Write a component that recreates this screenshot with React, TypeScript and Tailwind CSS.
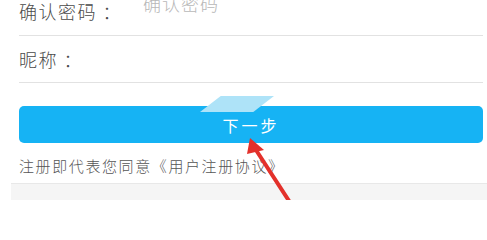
const font = { fontFamily: '"Noto Sans CJK SC", "Noto Sans", sans-serif' };

const Arrow = () => (
  <svg className="absolute left-0 top-0 pointer-events-none" width="487" height="200" viewBox="0 0 487 200">
    <line x1="256" y1="150" x2="291" y2="204" stroke="#e3312b" strokeWidth="4" strokeLinecap="round" />
    <polygon points="250,138 264,150 247,154" fill="#e3312b" />
  </svg>
);

export default function App() {
  return (
    <div className="relative w-[487px] h-[200px] overflow-hidden bg-white" style={font}>
      <div className="pl-[19px] pr-[4px]">
        <div className="h-[36px] flex items-start border-b border-[#e2e2e2]">
          <span className="w-[124px] text-[18px] leading-[22px] tracking-[1.5px] text-[#4a4a4a] font-light">确认密码 ：</span>
          <span className="-mt-[8px] text-[18px] leading-[22px] tracking-[1px] text-[#b8b8b8] font-light">确认密码</span>
        </div>
        <div className="h-[47px] flex items-center border-b border-[#e2e2e2]">
          <span className="text-[18px] leading-[22px] tracking-[1.5px] text-[#4a4a4a] font-light">昵称 ：</span>
        </div>
        <button className="mt-[23px] w-full h-[37px] rounded-[5px] bg-[#16b3f4] text-white text-[16px] tracking-[3px] flex items-center justify-center">
          下一步
        </button>
        <p className="mt-[14px] text-[15px] leading-[18px] tracking-[1.6px] text-[#555] font-light">注册即代表您同意《用户注册协议》</p>
      </div>
      <div className="absolute left-[11px] right-0 top-[183px] bottom-0 bg-[#f5f5f5] border-t border-[#e8e8e8]" />
      <div className="absolute left-[200px] top-[96px] w-[74px] h-[16px] bg-[#aee3f8] [clip-path:polygon(28%_0,100%_0,72%_100%,0_100%)]" />
      <Arrow />
    </div>
  );
}
